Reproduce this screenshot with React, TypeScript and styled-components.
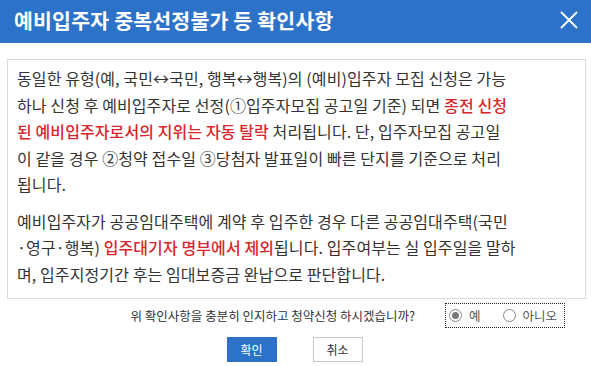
import React, { useState } from "react";
import styled, { createGlobalStyle } from "styled-components";

const GlobalStyle = createGlobalStyle`
	body {
		margin: 0;
		background: #fff;
		font-family: "Noto Sans CJK KR", "Noto Sans", sans-serif;
		color: #333;
	}
`;

function App() {
	const [agree, setAgree] = useState("Y");
	return (
		<>
			<GlobalStyle />
			<Popup>
				<Header>
					<Title>예비입주자 중복선정불가 등 확인사항</Title>
					<CloseButton aria-label="닫기">
						<svg width="18" height="18" viewBox="0 0 18 18">
							<path d="M1 1 L17 17 M17 1 L1 17" stroke="#fff" strokeWidth="1.8" fill="none" />
						</svg>
					</CloseButton>
				</Header>
				<NoticeBox>
					<Para>
						동일한 유형(예, 국민↔국민, 행복↔행복)의 (예비)입주자 모집 신청은 가능
						<br />
						하나 신청 후 예비입주자로 선정(①입주자모집 공고일 기준) 되면 <Red>종전 신청</Red>
						<br />
						<Red>된 예비입주자로서의 지위는 자동 탈락</Red> 처리됩니다. 단, 입주자모집 공고일
						<br />
						이 같을 경우 ②청약 접수일 ③당첨자 발표일이 빠른 단지를 기준으로 처리
						<br />
						됩니다.
					</Para>
					<Para>
						예비입주자가 공공임대주택에 계약 후 입주한 경우 다른 공공임대주택(국민
						<br />
						·영구·행복) <Red>입주대기자 명부에서 제외</Red>됩니다. 입주여부는 실 입주일을 말하
						<br />
						며, 입주지정기간 후는 임대보증금 완납으로 판단합니다.
					</Para>
				</NoticeBox>
				<QuestionRow>
					<Question>위 확인사항을 충분히 인지하고 청약신청 하시겠습니까?</Question>
					<RadioGroup>
						<RadioLabel>
							<RadioMark checked={agree === "Y"} />
							<HiddenRadio type="radio" name="agree" checked={agree === "Y"} onChange={() => setAgree("Y")} />
							예
						</RadioLabel>
						<RadioLabel>
							<RadioMark checked={agree === "N"} />
							<HiddenRadio type="radio" name="agree" checked={agree === "N"} onChange={() => setAgree("N")} />
							아니오
						</RadioLabel>
					</RadioGroup>
				</QuestionRow>
				<ButtonRow>
					<Button primary>확인</Button>
					<Button>취소</Button>
				</ButtonRow>
			</Popup>
		</>
	);
}

export default App;

const Popup = styled.div`
	width: 591px;
	height: 366px;
	display: flex;
	flex-direction: column;
	overflow: hidden;
`;

const Header = styled.div`
	height: 43px;
	padding: 0 13px 3px 14px;
	box-sizing: border-box;
	background-color: #2d72c9;
	display: flex;
	align-items: center;
	justify-content: space-between;
`;

const Title = styled.h1`
	margin: 0;
	font-size: 20.5px;
	font-weight: 700;
	color: #fff;
	letter-spacing: 0.2px;
`;

const CloseButton = styled.button`
	border: 0;
	padding: 0;
	background: none;
	display: flex;
	cursor: pointer;
`;

const NoticeBox = styled.div`
	margin: 16px 5px 0 7px;
	padding: 5px 9px 11px 9px;
	border: 1px solid #dcdcdc;
	display: flex;
	flex-direction: column;
	gap: 10px;
`;

const Para = styled.p`
	margin: 0;
	font-size: 16px;
	line-height: 26.5px;
	white-space: nowrap;
	color: #333;
	letter-spacing: 0.1px;
`;

const Red = styled.span`
	color: #d9262c;
	font-weight: 500;
`;

const QuestionRow = styled.div`
	margin-top: 4px;
	padding-right: 26px;
	display: flex;
	justify-content: flex-end;
	align-items: center;
	gap: 30px;
`;

const Question = styled.span`
	font-size: 12.5px;
	color: #333;
`;

const RadioGroup = styled.div`
	width: 120px;
	height: 25px;
	box-sizing: border-box;
	border: 1px dotted #222;
	padding-left: 3px;
	display: flex;
	align-items: center;
	gap: 22px;
`;

const RadioLabel = styled.label`
	display: flex;
	align-items: center;
	gap: 7px;
	font-size: 12.5px;
	color: #555;
	cursor: pointer;
`;

const HiddenRadio = styled.input`
	display: none;
`;

const RadioMark = styled.span<{ checked?: boolean }>`
	width: 11px;
	height: 11px;
	border-radius: 50%;
	border: 1px solid #888;
	background: #fff;
	position: relative;
	&::after {
		content: "";
		display: ${(p) => (p.checked ? "block" : "none")};
		position: absolute;
		left: 2px;
		top: 2px;
		width: 7px;
		height: 7px;
		border-radius: 50%;
		background: #777;
	}
`;

const ButtonRow = styled.div`
	margin-top: 9px;
	display: flex;
	justify-content: center;
	gap: 36px;
	padding-right: 2px;
`;

const Button = styled.button<{ primary?: boolean }>`
	width: 50px;
	height: 25px;
	padding: 0;
	font-family: inherit;
	font-size: 12px;
	border: 1px solid ${(p) => (p.primary ? "#2d72c9" : "#c8c8c8")};
	background: ${(p) => (p.primary ? "#2d72c9" : "#fff")};
	color: ${(p) => (p.primary ? "#fff" : "#333")};
	cursor: pointer;
`;
